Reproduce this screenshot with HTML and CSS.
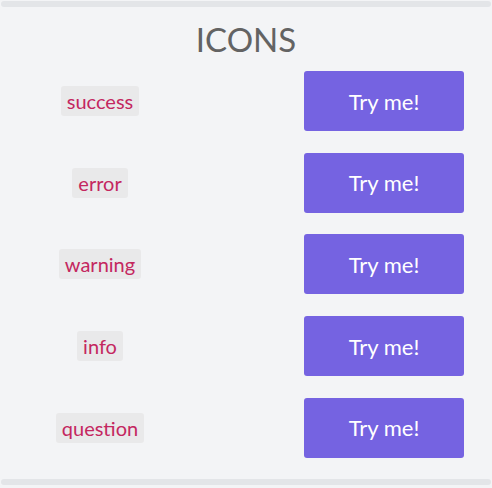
FILE: index.html
```html
<!DOCTYPE html>
<html>
<head>
<meta charset="utf-8">
<link rel="stylesheet" href="styles.css">
</head>
<body>
<div class="bar"></div>
<h1 class="title">ICONS</h1>
<div class="rows">
  <div class="row"><div class="cell-label"><code class="tag">success</code></div><button class="btn">Try me!</button></div>
  <div class="row"><div class="cell-label"><code class="tag">error</code></div><button class="btn">Try me!</button></div>
  <div class="row"><div class="cell-label"><code class="tag">warning</code></div><button class="btn">Try me!</button></div>
  <div class="row"><div class="cell-label"><code class="tag">info</code></div><button class="btn">Try me!</button></div>
  <div class="row"><div class="cell-label"><code class="tag">question</code></div><button class="btn">Try me!</button></div>
</div>
<div class="bar bar-bottom"></div>
</body>
</html>
```
FILE: styles.css
```css
html, body {
  margin: 0;
  padding: 0;
  background: #f3f4f6;
  font-family: Lato, "Noto Sans", sans-serif;
}
body {
  width: 492px;
  height: 488px;
  overflow: hidden;
}
.bar {
  margin: 1px 1px 0;
  height: 6px;
  border-radius: 3px;
  background: #e3e5e8;
}
.bar-bottom {
  margin-top: 21px;
}
.title {
  margin: 12px 0 0;
  text-align: center;
  font-weight: 400;
  font-size: 33px;
  line-height: 40px;
  color: #636363;
}
.rows {
  margin-top: 12px;
  display: flex;
  flex-direction: column;
  gap: 21.7px;
}
.row {
  display: flex;
  align-items: center;
  height: 60px;
}
.cell-label {
  width: 200px;
  display: flex;
  justify-content: center;
}
.tag {
  font-family: Lato, "Noto Sans", sans-serif;
  font-size: 20px;
  line-height: 30px;
  padding: 0 6px;
  color: #c4275f;
  background: #e9e9ea;
  border-radius: 3px;
}
.btn {
  margin-left: auto;
  margin-right: 28px;
  width: 160px;
  height: 60px;
  border: 0;
  border-radius: 3px;
  background: #7563e1;
  color: #ffffff;
  font-family: Lato, "Noto Sans", sans-serif;
  font-size: 22px;
  padding: 0;
}
```
